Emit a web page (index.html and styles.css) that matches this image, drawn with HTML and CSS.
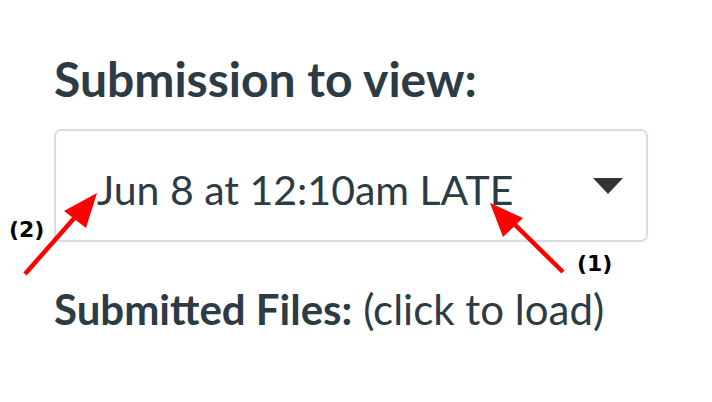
FILE: index.html
```html
<!DOCTYPE html>
<html>
<head>
<meta charset="utf-8">
<link rel="stylesheet" href="styles.css">
</head>
<body>
<div class="panel">
  <h2 class="title">Submission to view:</h2>
  <div class="select">
    <span class="select-text">Jun 8 at 12:10am LATE</span>
    <span class="caret"></span>
  </div>
  <p class="files"><strong>Submitted Files:</strong> (click to load)</p>
</div>
<span class="label label-2">(2)</span>
<span class="label label-1">(1)</span>
<svg class="arrows" width="712" height="402" viewBox="0 0 712 402">
  <line x1="25" y1="274" x2="84" y2="207" stroke="#ff0000" stroke-width="4.5"/>
  <polygon points="97,193 64,211 86,228" fill="#ff0000"/>
  <line x1="563" y1="272" x2="505" y2="215" stroke="#ff0000" stroke-width="4.5"/>
  <polygon points="490,203 503,237 523,218" fill="#ff0000"/>
</svg>
</body>
</html>
```
FILE: styles.css
```css
html, body {
  margin: 0;
  padding: 0;
  background: #ffffff;
}
body {
  width: 712px;
  height: 402px;
  position: relative;
  overflow: hidden;
  font-family: Lato, "Noto Sans", sans-serif;
  color: #2d3b45;
}
.panel {
  padding: 50px 0 0 54px;
  width: 594px;
}
.title {
  margin: 0;
  font-size: 48px;
  line-height: 1.2;
  font-weight: 700;
}
.select {
  margin-top: 21px;
  box-sizing: border-box;
  height: 113px;
  border: 2px solid #d7dde3;
  border-radius: 7px;
  display: flex;
  align-items: flex-start;
  justify-content: space-between;
  padding: 34px 23px 0 41px;
}
.select-text {
  font-size: 41px;
  line-height: 1.2;
}
.caret {
  width: 0;
  height: 0;
  margin-top: 13px;
  border-left: 15px solid transparent;
  border-right: 15px solid transparent;
  border-top: 16px solid #333333;
}
.files {
  margin: 42px 0 0 0;
  font-size: 42px;
  line-height: 1.2;
}
.files strong {
  font-weight: 700;
}
.label {
  position: absolute;
  font-family: "DejaVu Sans", sans-serif;
  font-weight: 700;
  font-size: 22px;
  line-height: 1;
  color: #000;
}
.label-2 {
  left: 9px;
  top: 219px;
}
.label-1 {
  left: 577px;
  top: 253px;
}
.arrows {
  position: absolute;
  left: 0;
  top: 0;
}
```
